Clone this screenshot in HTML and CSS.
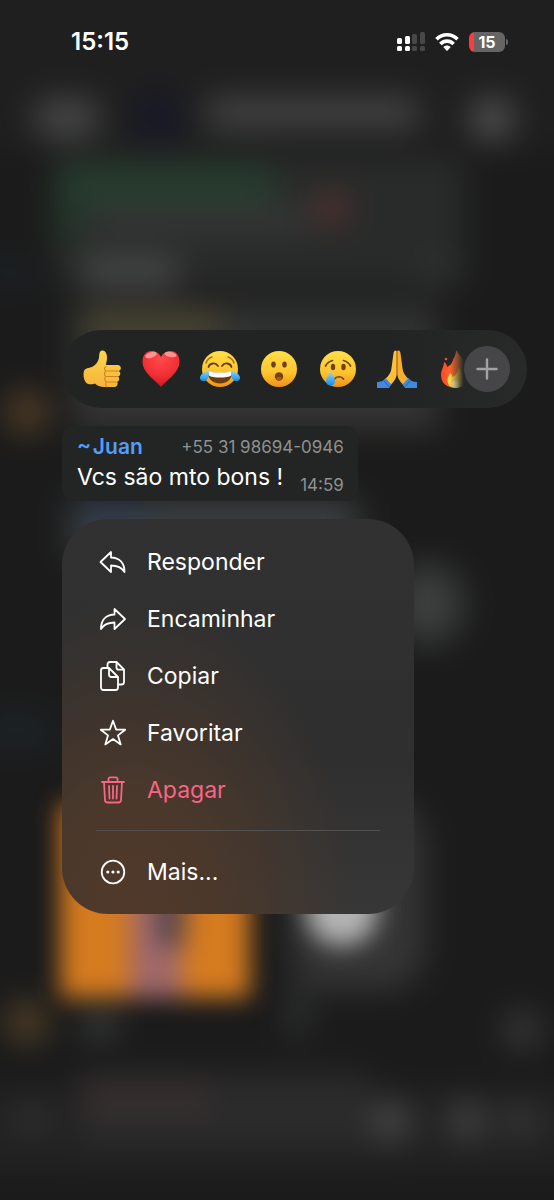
FILE: index.html
```html
<!DOCTYPE html>
<html lang="pt-BR">
<head>
    <meta charset="UTF-8">
    <meta name="viewport" content="width=device-width, initial-scale=1">
    <title>Mensagem</title>
    <link rel="stylesheet" href="styles.css">
</head>
<body>
    <div class="screen">
        <!-- conversa desfocada -->
        <svg class="backdrop" viewBox="0 0 554 1200" preserveAspectRatio="none" aria-hidden="true">
            <defs>
                <filter id="blur" x="-50%" y="-50%" width="200%" height="200%" color-interpolation-filters="sRGB"><feGaussianBlur stdDeviation="16"/></filter>
                <filter id="blur-photo" x="-50%" y="-50%" width="200%" height="200%" color-interpolation-filters="sRGB"><feGaussianBlur stdDeviation="12"/></filter>
            </defs>
            <g filter="url(#blur)">
                <rect x="-200" y="-200" width="954" height="1600" fill="#1b1b1b"/>
                <rect x="-200" y="-200" width="954" height="350" fill="#1f1f1f"/>
                <rect x="34" y="98" width="66" height="40" rx="18" fill="#464646"/>
                <circle cx="158" cy="117" r="26" fill="#171827"/>
                <rect x="205" y="97" width="215" height="32" rx="12" fill="#434343"/>
                <circle cx="492" cy="119" r="22" fill="#505050"/>
                <rect x="58" y="158" width="405" height="126" fill="#292b2a"/>
                <rect x="55" y="162" width="218" height="44" fill="#263c2e"/>
                <rect x="55" y="190" width="22" height="55" fill="#233a2b"/>
                <rect x="90" y="205" width="220" height="28" fill="#343635"/>
                <circle cx="331" cy="208" r="14" fill="#66342f"/>
                <rect x="82" y="256" width="96" height="32" fill="#464847"/>
                <rect x="420" y="260" width="34" height="26" fill="#303231"/>
                <rect x="-20" y="262" width="60" height="22" fill="#1a2225"/>
                <rect x="72" y="304" width="365" height="126" fill="#303231"/>
                <rect x="85" y="312" width="135" height="26" fill="#504830"/>
                <rect x="80" y="405" width="360" height="18" fill="#3a3838"/>
                <circle cx="27" cy="412" r="20" fill="#584126"/>
                <rect x="70" y="498" width="288" height="60" fill="#3b3e3f"/>
                <rect x="78" y="500" width="66" height="26" fill="#2f3d50"/>
                <ellipse cx="428" cy="604" rx="36" ry="40" fill="#3b3e3d"/>
                <rect x="-20" y="716" width="70" height="30" fill="#1b2428"/>
                <rect x="290" y="800" width="135" height="190" rx="40" fill="#353535"/>
                <rect x="290" y="985" width="16" height="50" fill="#343736"/>
                <circle cx="27" cy="1022" r="20" fill="#554226"/>
                <circle cx="100" cy="1022" r="16" fill="#3e4140"/>
                <circle cx="522" cy="1030" r="18" fill="#3c3c3c"/>
                <rect x="-200" y="1090" width="954" height="80" fill="#222"/>
                <rect x="80" y="1074" width="290" height="72" fill="#2b2b2b"/>
                <rect x="80" y="1082" width="130" height="32" fill="#382e2f"/>
                <circle cx="32" cy="1118" r="14" fill="#363636"/>
                <circle cx="391" cy="1121" r="20" fill="#484848"/>
                <circle cx="467" cy="1121" r="19" fill="#444"/>
                <circle cx="521" cy="1121" r="17" fill="#3a3a3a"/>
            </g>
            <g filter="url(#blur-photo)">
                <rect x="60" y="804" width="190" height="194" fill="#d57b20"/>
                <rect x="130" y="880" width="52" height="118" fill="#a0696a"/>
                <rect x="156" y="880" width="30" height="66" fill="#5c484c"/>
                <circle cx="342" cy="910" r="36" fill="#b4b4b4"/>
            </g>
        </svg>

        <header class="status-bar">
            <time class="clock">15:15</time>
            <div class="indicators">
                <svg class="signal" viewBox="0 0 28 20" aria-hidden="true">
                    <g fill="#fff">
                        <rect x="0" y="6" width="5" height="6" rx="1.5"/>
                        <rect x="8" y="4" width="5" height="8" rx="1.5"/>
                        <rect x="0" y="14" width="5" height="5" rx="1.5"/>
                        <rect x="8" y="14" width="5" height="5" rx="1.5"/>
                    </g>
                    <g fill="#484848">
                        <rect x="15" y="2" width="5" height="10" rx="1.5"/>
                        <rect x="23" y="0" width="5" height="12" rx="1.5"/>
                        <rect x="15" y="14" width="5" height="5" rx="1.5"/>
                        <rect x="23" y="14" width="5" height="5" rx="1.5"/>
                    </g>
                </svg>
                <svg class="wifi" viewBox="0 0 24 20" aria-hidden="true">
                    <g fill="none" stroke="#fff" stroke-width="3.6">
                        <path d="M1.500 7.200C7.500 1.200 16.500 1.200 22.500 7.200"/>
                        <path d="M5.400 12c3.700-3.800 9.500-3.800 13.200 0"/>
                    </g>
                    <path d="M8.300 15c2.200-2 5.200-2 7.400 0L12.600 18.400c-.4.400-.8.400-1.200 0z" fill="#fff"/>
                </svg>
                <div class="battery"><span class="battery-level">15</span></div>
            </div>
        </header>

        <main class="overlay">
            <div class="reactions">
                <button class="reaction" aria-label="Joinha">
                    <svg viewBox="0 0 40 40" aria-hidden="true">
                        <defs><linearGradient id="skin" x1="0" y1="0" x2="0" y2="1"><stop offset="0" stop-color="#ffd54b"/><stop offset="1" stop-color="#f6b43a"/></linearGradient></defs>
                        <path d="M2 22c1-3 5-3 8-4 4-2 6-5 7-9 .3-3 0-7 3-7.500 3-.5 5 3 5 7 0 3-1 5.500-1 7.500h11.500c4 0 4.500 5.500 1 6 2.500 1 2.500 5-.5 5.500 2 1.200 1.500 5-1 5.200 1.500 1.500.5 5.300-3 5.300H22c-4 0-7-1.500-9-3.500-4 1.500-8 1-9.500-1.500C1.500 30 1 25 2 22z" fill="url(#skin)"/>
                        <path d="M36 22H25.500M35.500 27.500H25M34 33h-8.500M24 17.500c-2 1-2 3.500 0 4.500-2 1-2 4.500 0 5.500-2 1-1.500 4.500.5 5.500-1.500 1-1 4 .5 5" fill="none" stroke="#c98322" stroke-width="1.100" stroke-linecap="round"/>
                    </svg>
                </button>
                <button class="reaction" aria-label="Amei">
                    <svg viewBox="0 0 40 40" aria-hidden="true">
                        <defs><radialGradient id="heart" cx=".5" cy=".2" r=".8"><stop offset="0" stop-color="#ff4b4d"/><stop offset=".6" stop-color="#f22f35"/><stop offset="1" stop-color="#cf1722"/></radialGradient></defs>
                        <path d="M20 38C15 31.500 1.500 24 1.500 12.500 1.500 6 5.500 2 10.500 2c4.500 0 7.500 2.500 9.500 6 2-3.500 5-6 9.500-6 5 0 9 4 9 10.500C38.500 24 25 31.500 20 38z" fill="url(#heart)"/>
                        <ellipse cx="10" cy="6" rx="6" ry="2.800" fill="#ffb3b0" opacity=".75" transform="rotate(-18 10 6)"/>
                        <ellipse cx="29.500" cy="5.500" rx="6" ry="2.600" fill="#ffb3b0" opacity=".75" transform="rotate(10 29.500 5.500)"/>
                    </svg>
                </button>
                <button class="reaction" aria-label="Haha">
                    <svg viewBox="0 0 40 40" aria-hidden="true">
                        <defs>
                            <linearGradient id="face" x1="0" y1="0" x2="0" y2="1"><stop offset="0" stop-color="#ffe046"/><stop offset=".6" stop-color="#fdc42f"/><stop offset="1" stop-color="#ee9119"/></linearGradient>
                            <linearGradient id="tear" x1="0" y1="0" x2="0" y2="1"><stop offset="0" stop-color="#8fdcff"/><stop offset="1" stop-color="#168de8"/></linearGradient>
                        </defs>
                        <circle cx="20" cy="20" r="18" fill="url(#face)"/>
                        <path d="M7.500 22c4 2.500 21 2.500 25 0 .5 7-5 12.500-12.500 12.500S7 29 7.500 22z" fill="#6d3b10"/>
                        <path d="M8 22c5 2 19 2 24 0 0 2-.5 4-1.500 5C25 29 15 29 9.500 27 8.500 26 8 24 8 22z" fill="#fff"/>
                        <path d="M8.500 18c1-4 7-5 9.500-1M22 17c2.500-4 8.500-3 9.500 1" fill="none" stroke="#6d3b10" stroke-width="1.800" stroke-linecap="round"/>
                        <path d="M6 14c1-3 3-5 6-6M28 8c3 1 5 3 6 6" fill="none" stroke="#a86c15" stroke-width="1.500" stroke-linecap="round"/>
                        <path d="M8.500 21c1.500 5-.5 11-5 11-4 0-4.500-4-2-6.500C3 24 6 23.500 8.500 21zM31.500 21c-1.500 5 .5 11 5 11 4 0 4.500-4 2-6.500-1.500-1.500-4.500-2-7-4.500z" fill="url(#tear)"/>
                    </svg>
                </button>
                <button class="reaction" aria-label="Uau">
                    <svg viewBox="0 0 40 40" aria-hidden="true">
                        <circle cx="20" cy="20" r="18" fill="url(#face)"/>
                        <g fill="#74400f">
                            <ellipse cx="14.500" cy="15.500" rx="2.300" ry="3.100"/>
                            <ellipse cx="25.500" cy="15.500" rx="2.300" ry="3.100"/>
                            <ellipse cx="20" cy="27.500" rx="4.200" ry="4.200"/>
                        </g>
                        <ellipse cx="20" cy="29.500" rx="2.800" ry="1.700" fill="#a75c19"/>
                    </svg>
                </button>
                <button class="reaction" aria-label="Triste">
                    <svg viewBox="0 0 40 40" aria-hidden="true">
                        <circle cx="20" cy="20" r="18" fill="url(#face)"/>
                        <g fill="#74400f">
                            <ellipse cx="15" cy="18" rx="2.200" ry="3.200"/>
                            <ellipse cx="25.500" cy="18" rx="2.200" ry="3.200"/>
                        </g>
                        <path d="M7.500 17c1.500-3 3.500-4.500 7-5.500M25.500 11.500c3.500 1 5.500 2.500 7 5.500M16.500 30c2-3 7-3 9 0" fill="none" stroke="#74400f" stroke-width="1.700" stroke-linecap="round"/>
                        <path d="M12.500 22.500c2 4 4.500 6.500 4.500 9.500 0 6-9 6-9 0 0-3 3-5 4.500-9.500z" fill="url(#tear)"/>
                    </svg>
                </button>
                <button class="reaction" aria-label="Obrigado">
                    <svg viewBox="0 0 40 40" aria-hidden="true">
                        <path d="M19.800 2c-1.800-1.500-3.200 0-3.400 3L14.500 19c-.5 4-1.600 6.500-6.200 11l4.500 6.500C17 33 19.800 29 19.800 24z" fill="#fcc03a"/>
                        <path d="M20.200 2c1.800-1.500 3.200 0 3.400 3l1.900 14c.5 4 1.600 6.500 6.200 11l-4.500 6.500c-4.200-3.500-7-7.500-7-12.500z" fill="#f5ae30"/>
                        <path d="M20 2v23" fill="none" stroke="#b86f18" stroke-width="1"/>
                        <path d="M0 33c4 0 6-1 8.500-4l6 6.500L12 39H0zM40 33c-4 0-6-1-8.500-4l-6 6.500L28 39h12z" fill="#4388dc"/>
                        <path d="M6.500 31l5.500 7M33.500 31L28 38" stroke="#2a65b3" stroke-width="1"/>
                    </svg>
                </button>
                <button class="reaction reaction-cut" aria-label="Fogo">
                    <svg viewBox="0 0 40 40" aria-hidden="true">
                        <defs><linearGradient id="fire" x1="0" y1="0" x2="1" y2="0"><stop offset="0" stop-color="#ff4b25"/><stop offset=".5" stop-color="#ff6f30"/><stop offset="1" stop-color="#e5a646"/></linearGradient></defs>
                        <path d="M20 1c5 8 14 14 14 25 0 8-6 13-14 13-9 0-15-5-15-13 0-5 3-8 3-13 2 1 3 3 3 5 4-2 5-4 6-7 .5-2 3-4 3-10z" fill="url(#fire)"/>
                        <path d="M20 39c-6 0-9-4-8.500-9 .5-3 2-4 2.500-6 2 1 2 3 2.500 4 4-2 6-6 6-9 5 5 7 20-2.500 20z" fill="#ffd84d"/>
                        <path d="M20 39c-4-1-5-5-2-8 1 2 2 2 3 0 3 3 3 8-1 8z" fill="#fff3ba"/>
                        <circle cx="10" cy="10" r="1.300" fill="#ff4b25"/>
                    </svg>
                </button>
                <button class="reaction-more" aria-label="Mais reações">
                    <svg viewBox="0 0 22 22" aria-hidden="true"><path d="M11 1.500v19M1.500 11h19" stroke="#a2a2a4" stroke-width="2.400" stroke-linecap="round"/></svg>
                </button>
            </div>

            <article class="message">
                <div class="message-head">
                    <span class="author">~&#8202;Juan</span>
                    <span class="phone">+55 31 98694-0946</span>
                </div>
                <div class="message-body">
                    <p class="message-text">Vcs são mto bons !</p>
                    <time class="message-time">14:59</time>
                </div>
            </article>

            <nav class="menu">
                <button class="menu-item">
                    <svg class="icon" viewBox="0 0 28 28" aria-hidden="true"><path d="M12 4v5.500c8.500.3 13.500 5.500 13.500 14.500-3-5-7-6.500-13.500-6.500V24L1.500 14z"/></svg>
                    <span>Responder</span>
                </button>
                <button class="menu-item">
                    <svg class="icon" viewBox="0 0 28 28" aria-hidden="true"><path d="M15.500 4v5.500C7 9.800 2 15 2 24c3-5 7-6.500 13.500-6.500V24L26 14z"/></svg>
                    <span>Encaminhar</span>
                </button>
                <button class="menu-item">
                    <svg class="icon" viewBox="0 0 28 30" aria-hidden="true">
                        <path d="M8.500 6.500V3.500c0-1.500 1-2.500 2.500-2.500h6.500l7.500 7.500V21c0 1.500-1 2.500-2.500 2.500H20M17.500 1v5.500c0 1.500.8 2.200 2.200 2.200H25"/>
                        <path d="M4.500 7H10l9 9v10.500c0 1.500-1 2.500-2.500 2.500h-12C3 29 2 28 2 26.500v-17C2 8 3 7 4.500 7zM10 7v6.500c0 1.500 1 2.500 2.500 2.500H19"/>
                    </svg>
                    <span>Copiar</span>
                </button>
                <button class="menu-item">
                    <svg class="icon" viewBox="0 0 28 28" aria-hidden="true"><path d="M14 1.800l3.100 8.700 9.100.2-7.200 5.700 2.700 9L14 20.100l-7.700 5.300 2.700-9-7.200-5.700 9.100-.2z"/></svg>
                    <span>Favoritar</span>
                </button>
                <button class="menu-item menu-item-danger">
                    <svg class="icon" viewBox="0 0 28 28" aria-hidden="true">
                        <path d="M3 6h22M9.500 6V3c0-1 .7-1.700 1.700-1.700h5.600c1 0 1.700.7 1.700 1.700v3M5 6l1 18.200c.1 1.500 1 2.300 2.500 2.300h11c1.500 0 2.400-.8 2.500-2.300L23 6"/>
                        <path d="M10 10l.5 12.500M14 10v12.500M18 10l-.5 12.500"/>
                    </svg>
                    <span>Apagar</span>
                </button>
                <hr class="menu-divider">
                <button class="menu-item">
                    <svg class="icon" viewBox="0 0 28 28" aria-hidden="true">
                        <circle cx="14" cy="14" r="11.300"/>
                        <g fill="#fff" stroke="none"><circle cx="8.800" cy="14" r="1.600"/><circle cx="14" cy="14" r="1.600"/><circle cx="19.200" cy="14" r="1.600"/></g>
                    </svg>
                    <span>Mais...</span>
                </button>
            </nav>
        </main>
    </div>
</body>
</html>
```

FILE: styles.css
```css
* {
    box-sizing: border-box;
}
body {
    margin: 0;
    background-color: #1b1b1b;
    color: #fff;
    font-family: Inter, "Liberation Sans", sans-serif;
}
button {
    padding: 0;
    border: 0;
    background: none;
    color: inherit;
    font: inherit;
    cursor: pointer;
}
svg {
    display: block;
}
.screen {
    position: relative;
    min-height: 100vh;
    overflow: hidden;
}
.backdrop {
    position: absolute;
    top: 0;
    left: 0;
    width: 100%;
    height: 100%;
}

/* barra de status */
.status-bar {
    position: relative;
    display: flex;
    justify-content: space-between;
    align-items: center;
    padding: 26px 49px 0 71px;
}
.clock {
    font-size: 24px;
    font-weight: 600;
    line-height: 32px;
}
.indicators {
    display: flex;
    align-items: center;
    gap: 10px;
}
.signal {
    width: 28px;
    height: 20px;
}
.wifi {
    width: 24px;
    height: 20px;
}
.battery {
    position: relative;
    width: 36px;
    height: 20px;
    border-radius: 6px;
    background: linear-gradient(to right, #ff3b3f 5px, #656565 5px);
    text-align: center;
}
.battery::after {
    content: "";
    position: absolute;
    top: 7px;
    right: -3px;
    width: 2px;
    height: 6px;
    border-radius: 0 2px 2px 0;
    background-color: #656565;
}
.battery-level {
    display: block;
    font-size: 16px;
    font-weight: 700;
    line-height: 20px;
}

.overlay {
    position: relative;
    display: flex;
    flex-direction: column;
    align-items: flex-start;
    padding: 272px 27px 0 62px;
}

/* reações */
.reactions {
    position: relative;
    display: flex;
    align-items: center;
    align-self: stretch;
    gap: 19px;
    height: 78px;
    padding-left: 20px;
    border-radius: 39px;
    background: linear-gradient(to right, #222423 70%, #282929);
    overflow: hidden;
}
.reaction {
    flex: none;
    width: 40px;
    height: 40px;
}
.reaction-cut {
    -webkit-mask-image: linear-gradient(to right, #000 35%, transparent 70%);
    mask-image: linear-gradient(to right, #000 35%, transparent 70%);
}
.reaction-more {
    position: absolute;
    top: 16px;
    right: 17px;
    display: flex;
    align-items: center;
    justify-content: center;
    width: 46px;
    height: 46px;
    border-radius: 50%;
    background-color: #464648;
}
.reaction-more svg {
    width: 22px;
    height: 22px;
}

/* mensagem */
.message {
    margin: 18px 0;
    padding: 6px 14px 6px 15px;
    border-radius: 12px;
    background-color: #232524;
}
.message-head,
.message-body {
    display: flex;
    justify-content: space-between;
}
.message-head {
    align-items: center;
    gap: 36px;
}
.author {
    color: #539dfb;
    font-size: 21px;
    font-weight: 600;
    line-height: 30px;
}
.phone {
    color: #8f9190;
    font-size: 17px;
    line-height: 30px;
}
.message-body {
    align-items: flex-end;
    gap: 17px;
}
.message-text {
    margin: 0;
    font-size: 23px;
    line-height: 30px;
    padding-bottom: 3px;
}
.message-time {
    color: #8f9190;
    font-size: 17px;
    line-height: 20px;
}

/* menu */
.menu {
    width: 352px;
    padding: 14px 0;
    border-radius: 46px;
    background:
        radial-gradient(ellipse at 20% 100%, #50392a 0, #4b382b 20%, rgba(75, 56, 43, 0) 56%),
        linear-gradient(#313131, #2f2f2f 60%, #373737);
}
.menu-item {
    display: flex;
    align-items: center;
    gap: 20px;
    width: 100%;
    height: 57px;
    padding: 0 37px;
    font-size: 23px;
    line-height: 30px;
    text-align: left;
}
.menu-item-danger {
    color: #f96584;
}
.icon {
    flex: none;
    width: 28px;
    height: 30px;
    fill: none;
    stroke: currentColor;
    stroke-width: 1.8;
    stroke-linecap: round;
    stroke-linejoin: round;
}
.menu-divider {
    height: 1px;
    margin: 12px 34px;
    border: 0;
    background-color: #51504e;
}
```
